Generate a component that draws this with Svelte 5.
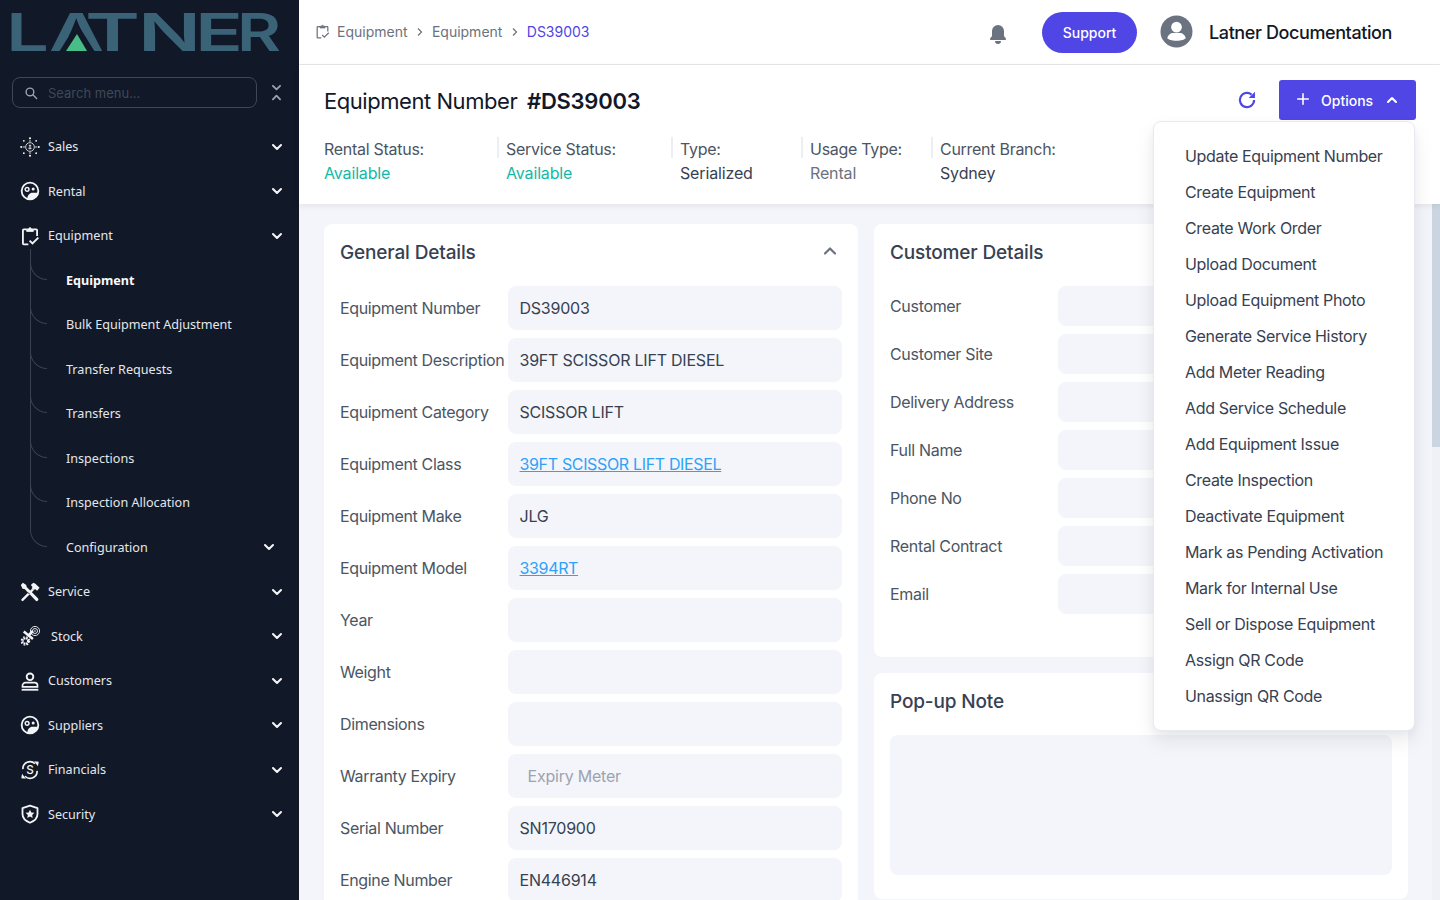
<script>
  const logoLetters = [
    { ch: "L", x: 6, w: 43 },
    { ch: "A", x: 49, w: 55 },
    { ch: "T", x: 85, w: 55 },
    { ch: "N", x: 138, w: 63 },
    { ch: "E", x: 195, w: 48 },
    { ch: "R", x: 237, w: 44 }
  ];
  const navTop = [
    { label: "Sales", icon: "sales" },
    { label: "Rental", icon: "face" },
    { label: "Equipment", icon: "clip" }
  ];
  const subNav = [
    { label: "Equipment", active: true },
    { label: "Bulk Equipment Adjustment" },
    { label: "Transfer Requests" },
    { label: "Transfers" },
    { label: "Inspections" },
    { label: "Inspection Allocation" },
    { label: "Configuration", more: true }
  ];
  const navBottom = [
    { label: "Service", icon: "service" },
    { label: "Stock", icon: "stock", wide: true },
    { label: "Customers", icon: "person" },
    { label: "Suppliers", icon: "face" },
    { label: "Financials", icon: "money" },
    { label: "Security", icon: "shield" }
  ];
  const stats = [
    { label: "Rental Status:", value: "Available", kind: "ok" },
    { label: "Service Status:", value: "Available", kind: "ok" },
    { label: "Type:", value: "Serialized" },
    { label: "Usage Type:", value: "Rental", kind: "muted" },
    { label: "Current Branch:", value: "Sydney" }
  ];
  const general = [
    { label: "Equipment Number", value: "DS39003" },
    { label: "Equipment Description", value: "39FT SCISSOR LIFT DIESEL" },
    { label: "Equipment Category", value: "SCISSOR LIFT" },
    { label: "Equipment Class", value: "39FT SCISSOR LIFT DIESEL", link: true },
    { label: "Equipment Make", value: "JLG" },
    { label: "Equipment Model", value: "3394RT", link: true },
    { label: "Year", value: "" },
    { label: "Weight", value: "" },
    { label: "Dimensions", value: "" },
    { label: "Warranty Expiry", value: "Expiry Meter", placeholder: true },
    { label: "Serial Number", value: "SN170900" },
    { label: "Engine Number", value: "EN446914" }
  ];
  const customer = ["Customer", "Customer Site", "Delivery Address", "Full Name", "Phone No", "Rental Contract", "Email"];
  const options = [
    "Update Equipment Number", "Create Equipment", "Create Work Order", "Upload Document",
    "Upload Equipment Photo", "Generate Service History", "Add Meter Reading", "Add Service Schedule",
    "Add Equipment Issue", "Create Inspection", "Deactivate Equipment", "Mark as Pending Activation",
    "Mark for Internal Use", "Sell or Dispose Equipment", "Assign QR Code", "Unassign QR Code"
  ];
</script>

{#snippet chevron(cls)}
  <svg class={cls} viewBox="0 0 20 20" fill="none" stroke="currentColor" stroke-width="2.6" stroke-linecap="round" stroke-linejoin="round"><path d="M5 7.5l5 5 5-5" /></svg>
{/snippet}

{#snippet icon(name)}
  <svg class="nav-icon" viewBox="0 0 24 24" fill="none" stroke="#f3f4f6" stroke-width="2">
    {#if name === "sales"}
      <circle cx="12" cy="12" r="5.2" stroke-width="1" />
      <path d="M12 9v6M10.5 10.5h3M10 13.5h4" stroke-width="1" />
      <g fill="#f3f4f6" stroke="none">
        <circle cx="12" cy="1.5" r="1.3" /><circle cx="12" cy="22.5" r="1.3" />
        <circle cx="1.5" cy="12" r="1.3" /><circle cx="22.5" cy="12" r="1.3" />
        <circle cx="4.6" cy="4.6" r="1.1" /><circle cx="19.4" cy="4.6" r="1.1" />
        <circle cx="4.6" cy="19.4" r="1.1" /><circle cx="19.4" cy="19.4" r="1.1" />
      </g>
      <path d="M12 3.5v2.5M12 18v2.5M3.5 12H6M18 12h2.500" stroke-width="1" />
    {:else if name === "face"}
      <circle cx="12" cy="12" r="10" stroke-width="2.2" />
      <circle cx="8.500" cy="10" r="2.300" stroke-width="1.700" />
      <circle cx="15.800" cy="9.500" r="1.800" fill="#f3f4f6" stroke="none" />
      <path d="M8.500 21.500c.5-4.500 3-7.500 6.500-7.500h7.200c-.3 4.500-4.500 8-10.200 8z" fill="#f3f4f6" stroke="none" />
    {:else if name === "clip"}
      <path d="M8 4H4.500a1 1 0 0 0-1 1v16a1 1 0 0 0 1 1H10M16 4h3.500a1 1 0 0 1 1 1v7" stroke-width="2.200" />
      <path d="M8 6.500V3.500h2.500a1.500 1.500 0 0 1 3 0H16v3z" fill="#f3f4f6" stroke="#f3f4f6" stroke-width="1" />
      <path d="M11.500 17.500l3.500 3.500 7-7" stroke-width="2.200" />
    {:else if name === "service"}
      <path d="M2 20.500L14.500 8l2 2L4 22.500a1.400 1.400 0 0 1-2-2z" fill="#f3f4f6" stroke="none" />
      <path d="M13 3.500l3-2.500 2.500 1 5 5-3 3.500-2.500-2-1.500 1.500-2.500-2.500 1-1.500z" fill="#f3f4f6" stroke="none" />
      <path d="M1 3.500L3.500 1l4 2.500.5 2.500 13.500 13.500a1.800 1.800 0 0 1-2.800 2.800L5.500 8.500 3 8z" fill="#f3f4f6" stroke="none" />
      <path d="M9.500 12.500l2 2" stroke="#111827" stroke-width="1.200" />
    {:else if name === "stock"}
      <circle cx="6.500" cy="18" r="3.300" stroke-width="2.600" stroke-dasharray="2 .6" />
      <circle cx="6.500" cy="18" r="5" stroke-width="1.500" stroke-dasharray="2 2" />
      <path d="M4.500 6.500l11 9M15.500 6l-6 6" stroke-width="3" />
      <circle cx="18" cy="6" r="5.500" stroke-width="1.100" />
      <circle cx="18" cy="6" r="3" stroke-width="1.100" />
      <circle cx="18" cy="6" r="1" fill="#f3f4f6" stroke="none" />
    {:else if name === "person"}
      <circle cx="12" cy="7" r="4" stroke-width="2.200" />
      <path d="M3 19v-1.500A3.500 3.500 0 0 1 6.500 14h11a3.500 3.500 0 0 1 3.500 3.500V19z" stroke-width="2" />
      <path d="M2 22.500h20" stroke-width="2.200" />
    {:else if name === "money"}
      <path d="M3.500 11a8.500 8.500 0 0 1 14.500-6.500M20.500 13A8.500 8.500 0 0 1 6 19.500" stroke-width="2" />
      <path d="M17 1.500l5.500.5-1 5.500zM7 22.500l-5.500-.5 1-5.500z" fill="#f3f4f6" stroke="none" />
      <text x="12" y="17" text-anchor="middle" class="icon-s">S</text>
    {:else if name === "shield"}
      <path d="M12 2l9 3v7c0 5-4 8.500-9 10.500C7 20.500 3 17 3 12V5z" stroke-width="2.200" stroke-linejoin="round" />
      <path d="M12 6.800l1.600 3.300 3.600.5-2.600 2.500.6 3.600L12 15l-3.200 1.700.6-3.600-2.600-2.500 3.600-.5z" fill="#f3f4f6" stroke="none" />
    {/if}
  </svg>
{/snippet}

{#snippet clipIcon()}
  <svg class="crumb-icon" viewBox="0 0 24 24" fill="none" stroke="#6b7280" stroke-width="2">
    <path d="M8 4H4.500a1 1 0 0 0-1 1v16a1 1 0 0 0 1 1H10M16 4h3.500a1 1 0 0 1 1 1v7" />
    <path d="M8 6.500V3.500h2.500a1.500 1.500 0 0 1 3 0H16v3z" fill="#6b7280" stroke-width="1" />
    <path d="M11.500 17.500l3.500 3.500 7-7" />
  </svg>
{/snippet}

{#snippet navRow(item)}
  <li class="nav-row">
    <span class="nav-ico-wrap">{@render icon(item.icon)}</span>
    <span class="nav-label" class:wide={item.wide}>{item.label}</span>
    {@render chevron("nav-chev")}
  </li>
{/snippet}

<div class="shell">
  <aside class="sidebar">
    <svg class="logo" viewBox="0 0 299 64">
      {#each logoLetters as l}
        <text x={l.x} y="51" textLength={l.w} lengthAdjust="spacingAndGlyphs" class="logo-text">{l.ch}</text>
      {/each}
      <polygon points="77,23 59,52 95,52" fill="#111827" />
      <polygon points="77,34 66,51 87,51" fill="#49bd87" />
    </svg>

    <div class="search-row">
      <div class="search">
        <svg viewBox="0 0 20 20" fill="none" stroke="#9ca3af" stroke-width="2" stroke-linecap="round"><circle cx="8.500" cy="8.500" r="5.500" /><path d="M13 13l5 5" /></svg>
        <span>Search menu...</span>
      </div>
      <svg class="collapse" viewBox="0 0 12 20" fill="none" stroke="#9ca3af" stroke-width="2" stroke-linecap="round" stroke-linejoin="round"><path d="M2 2l4 4 4-4M2 17l4-4 4 4" /></svg>
    </div>

    <ul class="nav">
      {#each navTop as item}
        {@render navRow(item)}
      {/each}
      {#each subNav as sub, i}
        <li class="sub-row" class:last={i === subNav.length - 1} class:active={sub.active}>
          <span>{sub.label}</span>
          {#if sub.more}
            {@render chevron("sub-chev")}
          {/if}
        </li>
      {/each}
      {#each navBottom as item}
        {@render navRow(item)}
      {/each}
    </ul>
  </aside>

  <main class="main">
    <header class="topbar">
      <nav class="crumbs">
        {@render clipIcon()}
        <span>Equipment</span>
        <svg class="crumb-sep" viewBox="0 0 10 10" fill="none" stroke="#6b7280" stroke-width="1.200"><path d="M3 1.500l3.500 3.500L3 8.500" /></svg>
        <span>Equipment</span>
        <svg class="crumb-sep" viewBox="0 0 10 10" fill="none" stroke="#6b7280" stroke-width="1.200"><path d="M3 1.500l3.500 3.500L3 8.500" /></svg>
        <span class="crumb-current">DS39003</span>
      </nav>
      <svg class="bell" viewBox="0 0 20 20" fill="#6b7280"><path d="M10 1a6 6 0 0 0-6 6v5l-1.700 2.300A1 1 0 0 0 3 16h14a1 1 0 0 0 .7-1.700L16 12V7a6 6 0 0 0-6-6zM10 20a3 3 0 0 1-3-3h6a3 3 0 0 1-3 3z" /></svg>
      <button class="support">Support</button>
      <svg class="avatar" viewBox="0 0 34 34"><circle cx="17" cy="17" r="16.500" fill="#6b7280" /><circle cx="17" cy="12.500" r="5.500" fill="#fff" /><path d="M7.500 24c.5-3.500 3.500-5.500 6-5.500h7c2.500 0 5.500 2 6 5.500-2 1.500-4 2.500-9.500 2.500s-7.500-1-9.500-2.500z" fill="#fff" /></svg>
      <span class="username">Latner Documentation</span>
    </header>

    <section class="page-head">
      <div class="title-row">
        <h1>Equipment Number <b>#DS39003</b></h1>
        <svg class="refresh" viewBox="0 0 24 24" fill="none" stroke="#4f46e5" stroke-width="2.600"><path d="M20.500 12a8.500 8.500 0 1 1-3-6.500" /><path d="M21.500 2v7.500H14z" fill="#4f46e5" stroke="none" /></svg>
        <button class="options">
          <svg viewBox="0 0 16 16" fill="none" stroke="#fff" stroke-width="1.800" stroke-linecap="round"><path d="M8 2v12M2 8h12" /></svg>
          <span>Options</span>
          {@render chevron("options-chev")}
        </button>
      </div>
      <div class="stats">
        {#each stats as s}
          <div class="stat">
            <div class="stat-label">{s.label}</div>
            <div class="stat-value {s.kind || ''}">{s.value}</div>
          </div>
        {/each}
      </div>
    </section>

    <div class="content">
      <div class="columns">
        <section class="card">
          <div class="card-head">
            <h2>General Details</h2>
            <svg class="card-chev" viewBox="0 0 20 20" fill="none" stroke="#6b7280" stroke-width="2.200" stroke-linecap="round" stroke-linejoin="round"><path d="M5 12.500l5-5 5 5" /></svg>
          </div>
          <div class="form-rows">
            {#each general as f}
              <div class="form-row">
                <span class="form-label">{f.label}</span>
                <div class="field" class:placeholder={f.placeholder}>
                  {#if f.link}<a href="#top" class="link">{f.value}</a>{:else}{f.value}{/if}
                </div>
              </div>
            {/each}
          </div>
        </section>

        <div class="right-col">
          <section class="card customer">
            <div class="card-head"><h2>Customer Details</h2></div>
            <div class="cust-rows">
              {#each customer as c}
                <div class="cust-row">
                  <span class="cust-label">{c}</span>
                  <div class="cust-field"></div>
                </div>
              {/each}
            </div>
          </section>
          <section class="card note">
            <h2>Pop-up Note</h2>
            <div class="note-box"></div>
          </section>
        </div>
      </div>
      <div class="scroll-track"><div class="scroll-thumb"></div></div>
    </div>

    <ul class="menu">
      {#each options as o}
        <li>{o}</li>
      {/each}
    </ul>
  </main>
</div>

<style>
  :global(body) {
    margin: 0;
    font-family: Inter, "Liberation Sans", sans-serif;
    background: #f4f5fa;
    overflow: hidden;
  }
  ul {
    list-style: none;
    margin: 0;
    padding: 0;
  }
  h1, h2 {
    margin: 0;
    font-weight: 500;
  }
  button {
    font-family: inherit;
    border: none;
    color: #fff;
    background: #4f46e5;
  }

  .shell {
    display: flex;
    height: 900px;
    overflow: hidden;
  }

  /* sidebar */
  .sidebar {
    width: 299px;
    flex: none;
    background: #111827;
    color: #e5e7eb;
    font-family: "Noto Sans", "Open Sans", sans-serif;
    font-size: 12.600px;
  }
  .logo {
    display: block;
    width: 299px;
    height: 64px;
  }
  .logo-text {
    font-family: Inter, sans-serif;
    font-size: 52px;
    font-weight: 600;
    fill: #3b6377;
  }
  .search-row {
    display: flex;
    align-items: center;
    padding: 13px 0 0 12px;
  }
  .search {
    width: 245px;
    height: 31px;
    box-sizing: border-box;
    border: 1px solid #3f4654;
    border-radius: 8px;
    display: flex;
    align-items: center;
    gap: 10px;
    padding-left: 11px;
    color: #3f4857;
    font-family: Inter, sans-serif;
    font-size: 13px;
  }
  .search svg {
    width: 14px;
    height: 14px;
  }
  .collapse {
    width: 11px;
    height: 18px;
    margin-left: 14px;
  }
  .nav {
    margin-top: 16.300px;
  }
  .nav-row, .sub-row {
    height: 44.500px;
    display: flex;
    align-items: center;
    position: relative;
  }
  .nav-ico-wrap {
    width: 48px;
    flex: none;
    display: flex;
    justify-content: center;
    padding-left: 12px;
    box-sizing: border-box;
  }
  .nav-icon {
    width: 20px;
    height: 20px;
    margin-left: -1px;
  }
  .icon-s {
    font-family: Inter, sans-serif;
    font-size: 14px;
    font-weight: 500;
    fill: #f3f4f6;
    stroke: none;
  }
  .nav-label {
    flex: 1;
  }
  .nav-label.wide {
    margin-left: 3px;
  }
  .nav-row :global(.nav-chev) {
    width: 16px;
    height: 16px;
    margin-right: 14px;
    color: #f3f4f6;
  }
  .sub-row {
    padding-left: 66px;
    box-sizing: border-box;
  }
  .sub-row span {
    flex: 1;
  }
  .sub-row.active {
    font-weight: 700;
    color: #f9fafb;
  }
  .sub-row::before {
    content: "";
    position: absolute;
    left: 30px;
    top: -9px;
    width: 17px;
    height: 31px;
    box-sizing: border-box;
    border-left: 1px solid #3a4251;
    border-bottom: 1px solid #3a4251;
    border-bottom-left-radius: 17px;
  }
  .sub-row::after {
    content: "";
    position: absolute;
    left: 30px;
    top: -9px;
    width: 1px;
    height: 44.500px;
    background: #3a4251;
  }
  .sub-row.last::after {
    display: none;
  }
  .sub-row :global(.sub-chev) {
    width: 16px;
    height: 16px;
    margin-right: 22px;
    color: #f3f4f6;
  }

  /* main */
  .main {
    flex: 1;
    min-width: 0;
    display: flex;
    flex-direction: column;
    position: relative;
  }
  .topbar {
    height: 65px;
    flex: none;
    box-sizing: border-box;
    background: #fff;
    border-bottom: 1px solid #e5e7eb;
    display: flex;
    align-items: center;
    padding: 0 48px 1px 16px;
  }
  .crumbs {
    display: flex;
    align-items: center;
    font-size: 14px;
    color: #6b7280;
    flex: 1;
  }
  .crumb-icon {
    width: 15px;
    height: 15px;
    margin-right: 7px;
  }
  .crumb-sep {
    width: 10px;
    height: 10px;
    margin: 0 7.200px;
  }
  .crumb-current {
    color: #4f46e5;
  }
  .bell {
    width: 20px;
    height: 20px;
    margin: 4px 34px 0 0;
  }
  .support {
    width: 95px;
    height: 41px;
    margin-top: 1px;
    border-radius: 21px;
    font-size: 14px;
    font-weight: 500;
  }
  .avatar {
    width: 33px;
    height: 33px;
    margin-left: 23px;
  }
  .username {
    margin: 1px 0 0 16px;
    font-size: 18px;
    font-weight: 500;
    color: #111827;
    letter-spacing: -0.400px;
  }

  .page-head {
    height: 139px;
    flex: none;
    box-sizing: border-box;
    background: #fff;
    box-shadow: 0 2px 6px rgba(17, 24, 39, 0.08);
    padding: 15px 24px 0 25px;
    position: relative;
    z-index: 1;
  }
  .title-row {
    display: flex;
    align-items: center;
    height: 40px;
  }
  h1 {
    flex: 1;
    padding-top: 2px;
    font-size: 22px;
    font-weight: 400;
    color: #111827;
    letter-spacing: -0.450px;
  }
  h1 b {
    font-weight: 600;
    margin-left: 4px;
    letter-spacing: -0.250px;
  }
  .refresh {
    width: 20px;
    height: 20px;
    margin-right: 22px;
  }
  .options {
    width: 137px;
    height: 40px;
    border-radius: 3px;
    display: flex;
    align-items: center;
    padding: 0 0 0 17px;
    font-size: 14px;
    font-weight: 500;
  }
  .options > svg:first-child {
    width: 14px;
    height: 14px;
    margin: -3px 11px 0 0;
  }
  .options :global(.options-chev) {
    width: 16px;
    height: 16px;
    margin-left: 11px;
    transform: rotate(180deg);
  }
  .stats {
    display: grid;
    grid-template-columns: 173px 174px 130px 130px auto;
    margin-top: 17px;
    font-size: 16px;
    line-height: 24px;
  }
  .stat {
    position: relative;
    padding-left: 9px;
    color: #4b5563;
  }
  .stat:first-child {
    padding-left: 0;
  }
  .stat:not(:first-child)::before {
    content: "";
    position: absolute;
    left: 0;
    top: 0;
    width: 2px;
    height: 21px;
    background: #eceef3;
  }
  .stat-label {
    letter-spacing: -0.280px;
  }
  .stat-value {
    color: #374151;
    letter-spacing: -0.150px;
  }
  .stat-value.ok {
    color: #14b8a6;
  }
  .stat-value.muted {
    color: #6b7280;
  }

  .content {
    flex: 1;
    min-height: 0;
    overflow: hidden;
    position: relative;
    background: #f4f5fa;
  }
  .scroll-track {
    position: absolute;
    top: 0;
    right: 0;
    bottom: 0;
    width: 8px;
    background: #eff1f7;
  }
  .scroll-thumb {
    height: 243px;
    background: #cbd5e1;
  }
  .columns {
    display: grid;
    grid-template-columns: 534px 534px;
    column-gap: 16px;
    align-items: start;
    padding: 20px 24px 0 25px;
  }
  .card {
    background: #fff;
    border-radius: 8px;
    padding: 0 16px;
  }
  .card-head {
    height: 56px;
    margin-bottom: 6px;
    display: flex;
    align-items: center;
    justify-content: space-between;
  }
  h2 {
    font-size: 19px;
    color: #374151;
    letter-spacing: -0.150px;
  }
  .card-chev {
    width: 20px;
    height: 20px;
    margin: -2px 2px 0 0;
  }
  .form-rows {
    display: flex;
    flex-direction: column;
    gap: 8px;
    padding-bottom: 24px;
  }
  .form-row {
    display: flex;
    align-items: center;
    font-size: 16px;
  }
  .form-label {
    width: 168px;
    flex: none;
    color: #4b5563;
    white-space: nowrap;
    letter-spacing: -0.350px;
  }
  .field {
    width: 334px;
    height: 44px;
    box-sizing: border-box;
    background: #f4f5fa;
    border-radius: 8px;
    padding: 0 11.500px;
    display: flex;
    align-items: center;
    color: #374151;
    letter-spacing: -0.220px;
  }
  .field.placeholder {
    color: #9ca3af;
    padding-left: 19.500px;
  }
  .link {
    color: #2ea2f8;
    text-decoration: underline;
    letter-spacing: -0.340px;
  }
  .right-col {
    display: flex;
    flex-direction: column;
    gap: 16px;
  }
  .customer {
    height: 433px;
    box-sizing: border-box;
  }
  .cust-rows {
    display: flex;
    flex-direction: column;
    gap: 8px;
  }
  .cust-row {
    display: flex;
    align-items: center;
    font-size: 16px;
    color: #4b5563;
  }
  .cust-label {
    width: 168px;
    flex: none;
    letter-spacing: -0.320px;
  }
  .cust-field {
    flex: 1;
    height: 40px;
    background: #f4f5fa;
    border-radius: 8px;
  }
  .note {
    height: 226px;
    box-sizing: border-box;
    padding-top: 17px;
  }
  .note h2 {
    line-height: 24px;
  }
  .note-box {
    margin-top: 21px;
    height: 140px;
    background: #f4f5fa;
    border-radius: 8px;
  }

  .menu {
    position: absolute;
    z-index: 5;
    left: 854px;
    top: 121px;
    width: 262px;
    box-sizing: border-box;
    padding: 16px 0;
    background: #fff;
    border: 1px solid #e8eaf0;
    border-radius: 8px;
    box-shadow: 0 10px 20px rgba(17, 24, 39, 0.08), 0 4px 8px rgba(17, 24, 39, 0.04);
    font-size: 16px;
    color: #374151;
    letter-spacing: -0.330px;
  }
  .menu li {
    height: 36px;
    line-height: 36px;
    padding-left: 31px;
    white-space: nowrap;
  }
</style>
